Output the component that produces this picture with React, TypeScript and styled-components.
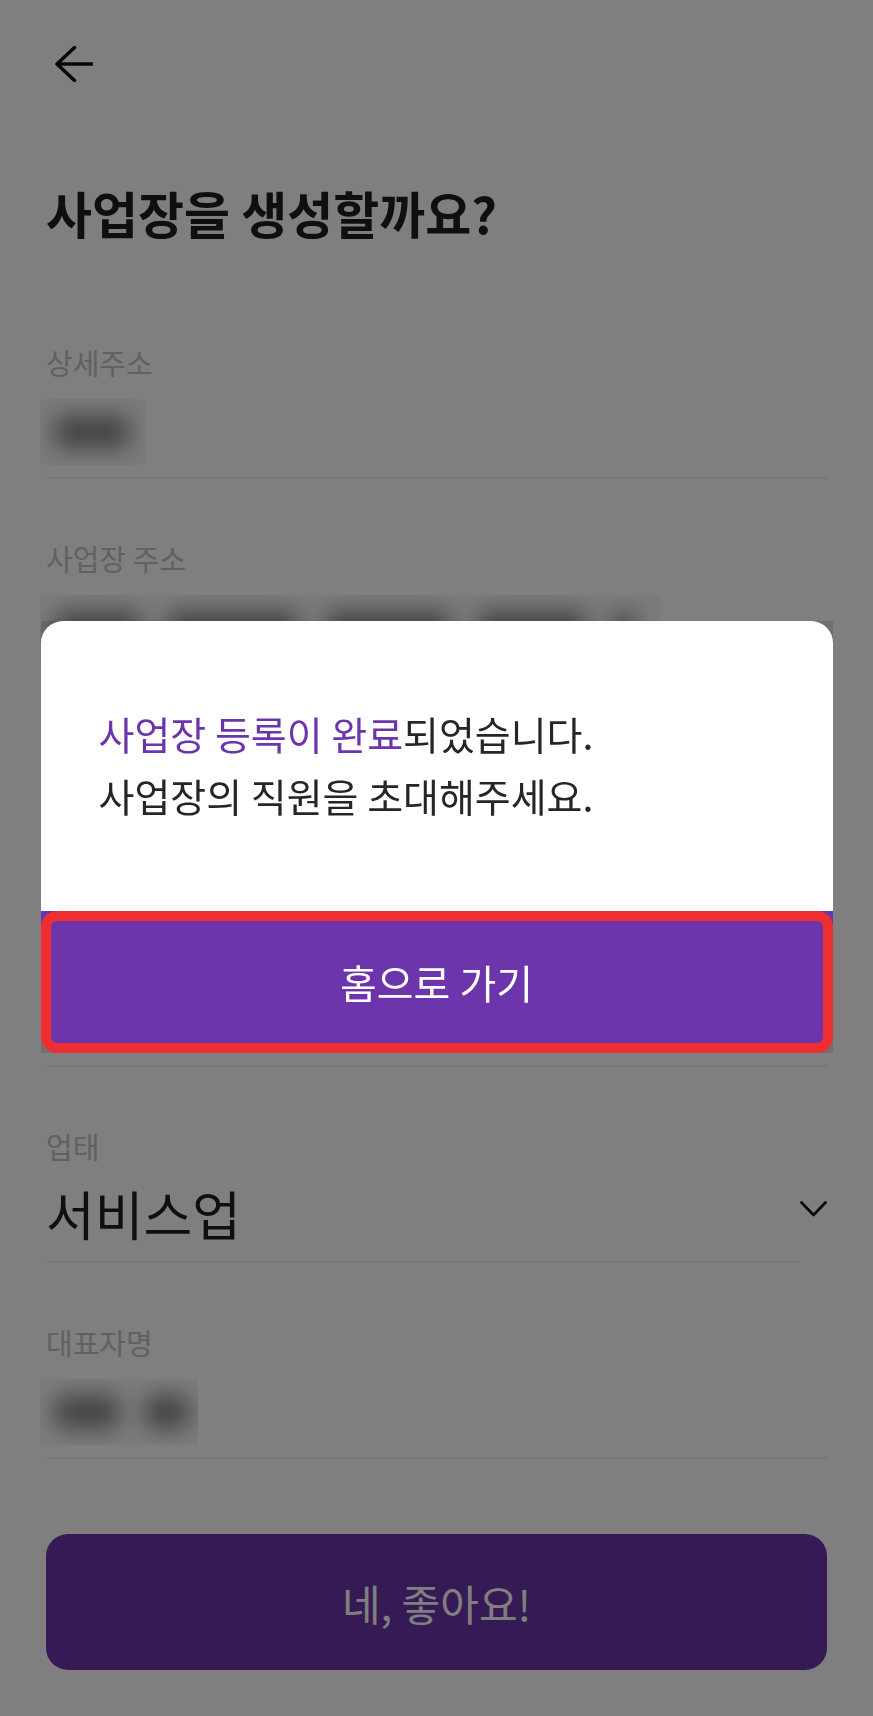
import React from "react";
import styled, { createGlobalStyle } from "styled-components";

const GlobalStyle = createGlobalStyle`
  html, body {
    margin: 0;
    padding: 0;
    background: #ffffff;
  }
  body {
    font-family: "Noto Sans CJK KR", "Noto Sans", sans-serif;
    -webkit-font-smoothing: antialiased;
  }
  * { box-sizing: border-box; }
`;

const Page = styled.div`
  min-height: 1716px;
  padding: 0 46px;
  display: flex;
  flex-direction: column;
  background: #ffffff;
`;

const Header = styled.header`
  height: 187px;
  padding-top: 46px;
  padding-left: 9px;
  display: flex;
  align-items: flex-start;
`;

const BackButton = styled.button`
  width: 38px;
  height: 36px;
  padding: 0;
  border: none;
  background: transparent;
  display: flex;
  color: #111111;
`;

const Title = styled.h1`
  margin: 0;
  font-size: 50px;
  line-height: 50px;
  font-weight: 700;
  color: #1e1e1e;
`;

const Form = styled.div`
  display: flex;
  flex-direction: column;
  padding-top: 112px;
`;

const Field = styled.div`
  display: flex;
  flex-direction: column;
  & + & {
    margin-top: 66px;
  }
`;

const Label = styled.div`
  height: 26px;
  font-size: 29px;
  line-height: 26px;
  color: #c2c2c2;
  margin-bottom: 24px;
`;

const ValueRow = styled.div`
  display: flex;
  align-items: flex-start;
  height: 66px;
`;

const SelectRow = styled.div`
  display: flex;
  align-items: flex-start;
`;

const SelectMain = styled.div`
  flex: 1;
  display: flex;
  flex-direction: column;
`;

const ValueText = styled.div`
  font-size: 53px;
  line-height: 60px;
  color: #1e1e1e;
`;

const BlurBox = styled.div<{ $w: number }>`
  width: ${(p) => p.$w}px;
  height: 66px;
  margin-left: -6px;
  padding-left: 14px;
  display: flex;
  align-items: center;
  gap: 24px;
  background: rgba(0, 0, 0, 0.03);
  overflow: hidden;
`;

const Blob = styled.span<{ $w: number }>`
  flex: none;
  width: ${(p) => p.$w}px;
  height: 34px;
  border-radius: 14px;
  background: #8a8a8a;
  filter: blur(11px);
`;

const Divider = styled.div`
  height: 2px;
  margin-top: 12px;
  background: #ececec;
`;

const Chevron = styled.div`
  width: 27px;
  height: 16px;
  margin-top: 18px;
  color: #111111;
  display: flex;
`;

const PrimaryButton = styled.button`
  margin-top: 75px;
  height: 136px;
  border: none;
  border-radius: 22px;
  background: #6c35ab;
  color: #ffffff;
  font-family: "Noto Sans CJK KR", "Noto Sans", sans-serif;
  font-size: 42px;
  font-weight: 400;
  display: flex;
  align-items: center;
  justify-content: center;
`;

const Overlay = styled.div`
  position: fixed;
  inset: 0;
  background: rgba(0, 0, 0, 0.5);
  display: flex;
  justify-content: center;
  align-items: flex-start;
  padding-top: 621px;
`;

const Modal = styled.div`
  width: 792px;
  height: 432px;
  display: flex;
  flex-direction: column;
  background: rgba(0, 0, 0, 0.12);
`;

const ModalBody = styled.div`
  height: 290px;
  background: #ffffff;
  border-radius: 22px 22px 0 0;
  padding: 81px 0 0 58px;
`;

const Message = styled.p`
  margin: 0;
  font-size: 39px;
  line-height: 62px;
  color: #262626;
`;

const Highlight = styled.span`
  color: #6c35ab;
`;

const ModalFooter = styled.div`
  flex: 1;
  display: flex;
  background: linear-gradient(#6c35ab 50%, transparent 50%);
`;

const ModalButton = styled.button`
  flex: 1;
  border: 10px solid #ee2e31;
  border-radius: 16px;
  background: #6c35ab;
  color: #ffffff;
  font-family: "Noto Sans CJK KR", "Noto Sans", sans-serif;
  font-size: 40px;
  font-weight: 400;
  display: flex;
  align-items: center;
  justify-content: center;
`;

const BackArrow = () => (
  <svg width="38" height="36" viewBox="0 0 38 36" fill="none">
    <path
      d="M2 18 H38 M19.5 1.5 L2 18 L19.5 34.5"
      stroke="currentColor"
      strokeWidth="3.6"
      strokeLinecap="round"
      strokeLinejoin="round"
    />
  </svg>
);

const ChevronDown = () => (
  <svg width="27" height="16" viewBox="0 0 27 16" fill="none">
    <path
      d="M1.5 1.5 L13.5 14 L25.5 1.5"
      stroke="currentColor"
      strokeWidth="2.6"
      strokeLinecap="round"
      strokeLinejoin="round"
    />
  </svg>
);

const Redacted = ({ width, blobs }: { width: number; blobs: number[] }) => (
  <BlurBox $w={width}>
    {blobs.map((w, i) => (
      <Blob key={i} $w={w} />
    ))}
  </BlurBox>
);

export default function App() {
  return (
    <>
      <GlobalStyle />
      <Page>
        <Header>
          <BackButton aria-label="뒤로가기">
            <BackArrow />
          </BackButton>
        </Header>
        <Title>사업장을 생성할까요?</Title>
        <Form>
          <Field>
            <Label>상세주소</Label>
            <ValueRow>
              <Redacted width={106} blobs={[76]} />
            </ValueRow>
            <Divider />
          </Field>
          <Field>
            <Label>사업장 주소</Label>
            <ValueRow>
              <Redacted width={620} blobs={[88, 134, 128, 112, 24]} />
            </ValueRow>
            <Divider />
          </Field>
          <Field>
            <Label />
            <ValueRow />
            <Divider />
          </Field>
          <Field>
            <Label />
            <ValueRow />
            <Divider />
          </Field>
          <Field>
            <Label>업태</Label>
            <SelectRow>
              <SelectMain>
                <ValueRow>
                  <ValueText>서비스업</ValueText>
                </ValueRow>
                <Divider />
              </SelectMain>
              <Chevron>
                <ChevronDown />
              </Chevron>
            </SelectRow>
          </Field>
          <Field>
            <Label>대표자명</Label>
            <ValueRow>
              <Redacted width={158} blobs={[66, 46]} />
            </ValueRow>
            <Divider />
          </Field>
        </Form>
        <PrimaryButton>네, 좋아요!</PrimaryButton>
      </Page>
      <Overlay>
        <Modal>
          <ModalBody>
            <Message>
              <Highlight>사업장 등록이 완료</Highlight>되었습니다.
              <br />
              사업장의 직원을 초대해주세요.
            </Message>
          </ModalBody>
          <ModalFooter>
            <ModalButton>홈으로 가기</ModalButton>
          </ModalFooter>
        </Modal>
      </Overlay>
    </>
  );
}
